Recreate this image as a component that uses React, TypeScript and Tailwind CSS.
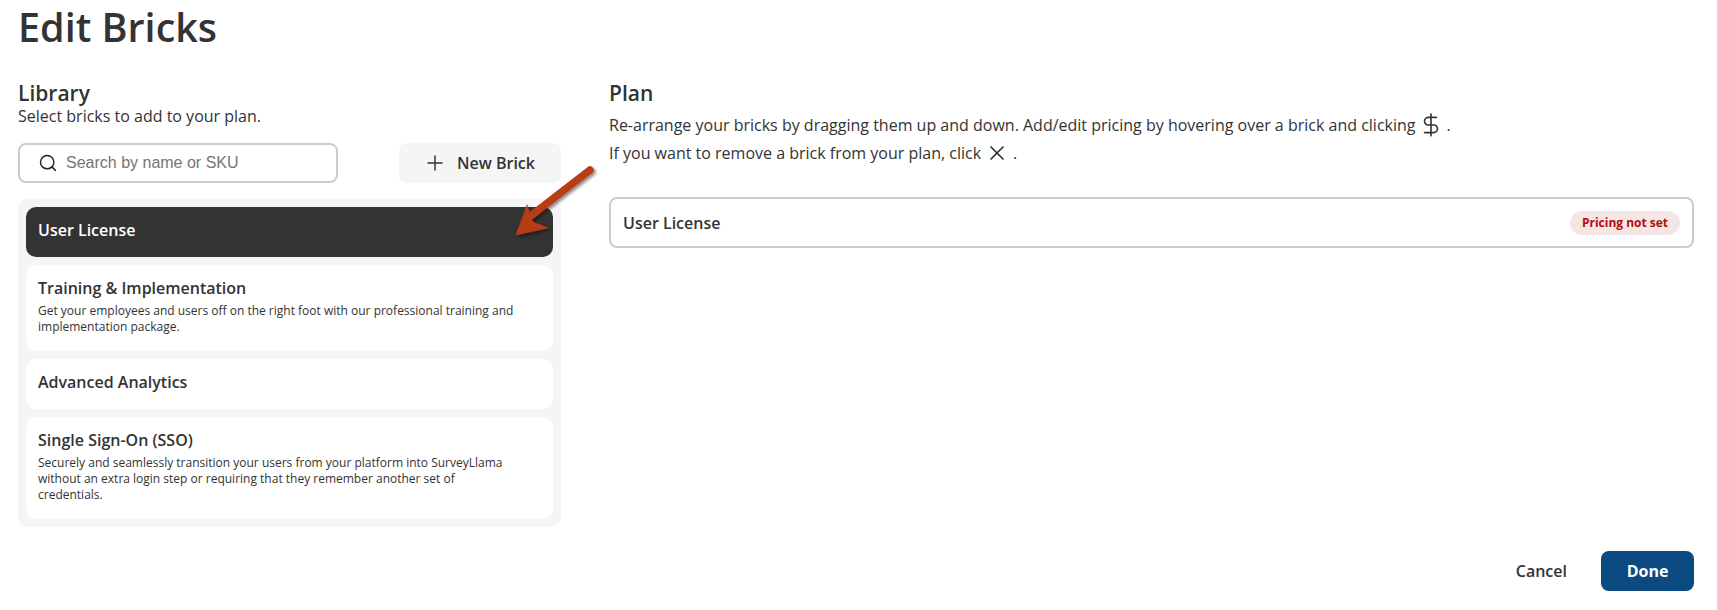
import React from 'react';
import { DollarSign, Plus, Search, X } from 'lucide-react';

interface Brick {
  name: string;
  description?: string;
  selected?: boolean;
}

const bricks: Brick[] = [
  { name: 'User License', selected: true },
  {
    name: 'Training & Implementation',
    description:
      'Get your employees and users off on the right foot with our professional training and implementation package.',
  },
  { name: 'Advanced Analytics' },
  {
    name: 'Single Sign-On (SSO)',
    description:
      'Securely and seamlessly transition your users from your platform into SurveyLlama without an extra login step or requiring that they remember another set of credentials.',
  },
];

const BrickCard: React.FC<{ brick: Brick }> = ({ brick }) => (
  <div
    className={`rounded-[10px] px-3 pt-[10px] pb-[14px] ${
      brick.selected ? 'bg-[#333333] text-white' : 'bg-white text-[#333333]'
    }`}
  >
    <h3 className="text-base leading-[26px] font-semibold">{brick.name}</h3>
    {brick.description && <p className="mt-[2px] mb-[2px] pr-6 text-xs leading-4">{brick.description}</p>}
  </div>
);

export default function App() {
  return (
    <div className="relative h-[610px] w-full overflow-hidden bg-white font-['Open_Sans',sans-serif] text-[#333333]">
      <h1 className="pt-1 pl-[18px] text-[39.5px] leading-[46px] font-semibold">Edit Bricks</h1>

      <div className="mt-[31px] flex gap-12 pr-[23px] pl-[18px]">
        {/* Library */}
        <section className="w-[543px] shrink-0">
          <h2 className="text-[21px] leading-[24px] font-semibold">Library</h2>
          <p className="mt-[1px] text-base leading-[20px]">Select bricks to add to your plan.</p>

          <div className="mt-[17px] flex justify-between">
            <label className="flex h-10 w-[320px] items-center gap-2 rounded-lg border-2 border-[#cccccc] px-[18px]">
              <Search size={20} strokeWidth={1.75} className="shrink-0 text-[#222222]" />
              <input
                placeholder="Search by name or SKU"
                className="w-full bg-transparent font-['Liberation_Sans',sans-serif] text-base outline-none placeholder:text-[#757575]"
              />
            </label>
            <button className="flex h-10 w-[162px] items-center justify-center gap-[10px] rounded-lg bg-[#f5f5f5] pr-[2px] text-base font-semibold">
              <Plus size={24} strokeWidth={1.5} />
              New Brick
            </button>
          </div>

          <div className="mt-4 flex flex-col gap-2 rounded-[10px] bg-[#f5f5f5] p-2">
            {bricks.map((brick) => (
              <BrickCard key={brick.name} brick={brick} />
            ))}
          </div>
        </section>

        {/* Plan */}
        <section className="min-w-0 flex-1">
          <h2 className="text-[21px] leading-[24px] font-semibold">Plan</h2>
          <p className="mt-[6px] flex h-7 items-center text-base">
            Re-arrange your bricks by dragging them up and down. Add/edit pricing by hovering over a brick and clicking
            <DollarSign size={26} strokeWidth={1.5} className="mr-[3px] ml-[2px]" />.
          </p>
          <p className="flex h-7 items-center text-base">
            If you want to remove a brick from your plan, click
            <X size={24} strokeWidth={1.75} className="mx-[4px]" />.
          </p>
          <div className="mt-[30px] flex h-[51px] items-center justify-between rounded-lg border-2 border-[#cccccc] pr-[12px] pl-[12px]">
            <span className="text-base font-semibold">User License</span>
            <span className="flex h-6 w-[110px] items-center justify-center rounded-full bg-[#f5e6e6] text-xs font-bold text-[#b30d0d]">
              Pricing not set
            </span>
          </div>
        </section>
      </div>

      <div className="mt-6 flex items-center justify-end gap-[34px] pr-[23px]">
        <button className="text-base font-semibold">Cancel</button>
        <button className="h-10 w-[93px] rounded-lg bg-[#0a4a80] text-base font-bold text-white">Done</button>
      </div>

      {/* annotation arrow */}
      <svg className="absolute top-[160px] left-[505px]" width="95" height="85" viewBox="505 160 95 85">
        <defs>
          <filter id="arrowShadow" x="-20%" y="-20%" width="140%" height="140%">
            <feDropShadow dx="2" dy="2" stdDeviation="1.5" floodColor="#000000" floodOpacity="0.45" />
          </filter>
        </defs>
        <g filter="url(#arrowShadow)" fill="#b83c16" stroke="#b83c16" strokeLinecap="round">
          <path d="M590 170 L528 218" strokeWidth="7.5" fill="none" />
          <path d="M527 205 L516 235 L548 228 L533 222 Z" strokeWidth="0.5" />
        </g>
      </svg>
    </div>
  );
}
